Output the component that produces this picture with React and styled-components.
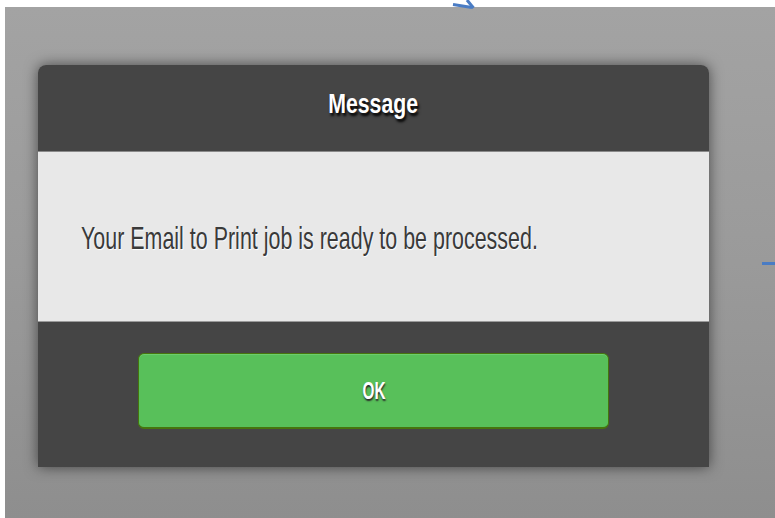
import React from 'react';
import styled, { createGlobalStyle } from 'styled-components';

const GlobalStyle = createGlobalStyle`
  html, body {
    margin: 0;
    padding: 0;
    background: #ffffff;
    font-family: "Liberation Sans", Arial, sans-serif;
  }
`;

function App() {
  return (
    <>
      <GlobalStyle />
      <Page>
        <Stage>
          <Dialog>
            <Header>
              <Title>Message</Title>
            </Header>
            <Body>
              <BodyText>Your Email to Print job is ready to be processed.</BodyText>
            </Body>
            <Footer>
              <OkButton type="button">
                <ButtonLabel>OK</ButtonLabel>
              </OkButton>
            </Footer>
          </Dialog>
        </Stage>
        <ArrowMark width="26" height="11" viewBox="0 0 26 11">
          <path d="M1 4.5 L20 7.5" stroke="#4a7cc4" strokeWidth="3" fill="none" />
          <path d="M15 0 L21.5 8" stroke="#4a7cc4" strokeWidth="3" fill="none" />
        </ArrowMark>
        <SideMark />
      </Page>
    </>
  );
}

export default App;

// Styled Components
const Page = styled.div`
  position: relative;
  width: 775px;
  height: 518px;
  overflow: hidden;
  padding: 7px 0 0 5px;
  box-sizing: border-box;
`;

const Stage = styled.div`
  height: 511px;
  padding: 58px 0 0 33px;
  box-sizing: border-box;
  background: linear-gradient(180deg, #a3a3a3 0%, #9a9a9a 50%, #8e8e8e 100%);
`;

const Dialog = styled.div`
  width: 671px;
  border-radius: 8px 8px 0 0;
  overflow: hidden;
  box-shadow: 0 0 14px rgba(0, 0, 0, 0.55);
`;

const Header = styled.div`
  height: 86px;
  background: #454545;
  border-bottom: 1px solid #8a8a8a;
  display: flex;
  align-items: center;
  justify-content: center;
`;

const Title = styled.span`
  display: inline-block;
  color: #ffffff;
  font-size: 28px;
  font-weight: bold;
  transform: scaleX(0.76);
  text-shadow: 2px 3px 3px #000000;
  margin-bottom: 8px;
`;

const Body = styled.div`
  height: 170px;
  background: #e8e8e8;
  border-bottom: 1px solid #9a9a9a;
  display: flex;
  align-items: center;
  padding: 4px 0 0 43px;
  box-sizing: border-box;
`;

const BodyText = styled.span`
  display: inline-block;
  color: #3a3a3a;
  font-size: 32px;
  white-space: nowrap;
  transform: scaleX(0.67);
  transform-origin: left center;
  text-shadow: 1px 1px 1px #ffffff;
`;

const Footer = styled.div`
  height: 145px;
  background: #454545;
  padding: 31px 100px 0;
  box-sizing: border-box;
`;

const OkButton = styled.button`
  display: flex;
  align-items: center;
  justify-content: center;
  width: 100%;
  height: 76px;
  padding: 0;
  background: #58c05a;
  border: 1px solid #46740e;
  border-bottom-width: 2px;
  border-radius: 6px;
  box-shadow: inset 0 1px 0 #6ccd6c;
  font-family: inherit;
  cursor: pointer;
`;

const ButtonLabel = styled.span`
  display: inline-block;
  color: #ffffff;
  font-size: 24px;
  font-weight: bold;
  transform: scaleX(0.64);
  text-shadow: 1px 2px 2px #2a2a2a;
`;

const ArrowMark = styled.svg`
  position: absolute;
  left: 452px;
  top: 0;
`;

const SideMark = styled.div`
  position: absolute;
  left: 762px;
  top: 262px;
  width: 13px;
  height: 3px;
  background: #4a7cc4;
`;
